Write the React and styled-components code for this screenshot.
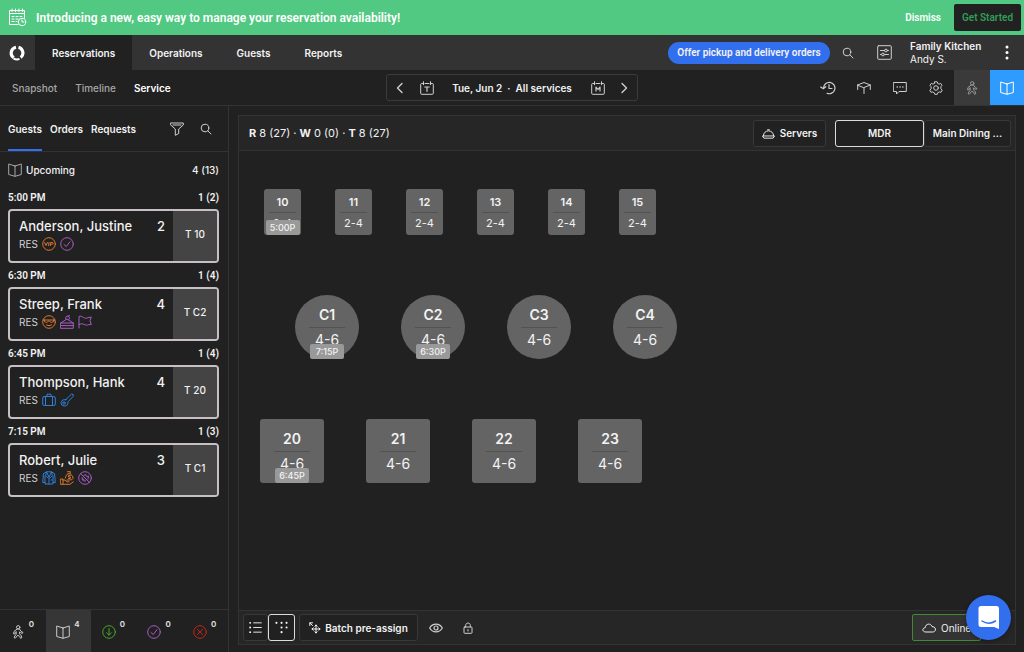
import styled, { createGlobalStyle, css } from "styled-components";

const GlobalStyle = createGlobalStyle`
  *, *::before, *::after {
    box-sizing: border-box;
  }

  html, body, #root {
    height: 100%;
    margin: 0;
  }

  body {
    background: #212121;
    color: #f2f2f2;
    font-family: Inter, "Liberation Sans", sans-serif;
    font-size: 10px;
    line-height: 14px;
  }

  a {
    color: inherit;
    text-decoration: none;
  }

  button {
    margin: 0;
    padding: 0;
    border: 0;
    background: none;
    color: inherit;
    font: inherit;
    cursor: pointer;
  }

  svg {
    display: block;
    flex: none;
  }
`;

const Page = styled.div`
  display: flex;
  flex-direction: column;
  min-height: 100vh;
`;

/* Banner */

const Banner = styled.div`
  display: flex;
  align-items: center;
  height: 35px;
  padding: 0 3px 0 8px;
  background: #52c982;
  color: #fff;
  font-family: Roboto, "Liberation Sans", sans-serif;
`;

const BannerText = styled.p`
  flex: 1;
  margin: 0 0 0 9px;
  font-size: 12px;
  font-weight: 600;
`;

const DismissButton = styled.button`
  margin-right: 13px;
  font-weight: 600;
`;

const StartButton = styled.button`
  width: 67px;
  height: 27px;
  border-radius: 2px;
  background: #212121;
  color: #2f9d58;
  font-weight: 600;
  white-space: nowrap;
`;

/* Main navigation */

const NavBar = styled.header`
  display: flex;
  align-items: stretch;
  height: 35px;
  background: #333;
`;

const Logo = styled.a`
  display: flex;
  align-items: center;
  justify-content: center;
  width: 35px;
  padding-right: 2px;
`;

const Nav = styled.nav`
  display: flex;
  flex: 1;
`;

const NavLink = styled.a`
  display: flex;
  align-items: center;
  padding: 0 17px;
  background: ${(p) => (p.$active ? "#212121" : "transparent")};
  font-weight: 600;
`;

const NavTools = styled.div`
  display: flex;
  align-items: center;
  padding-right: 11px;
`;

const OfferButton = styled.button`
  width: 162px;
  height: 22px;
  border-radius: 11px;
  background: #326fef;
  font-family: Roboto, "Liberation Sans", sans-serif;
  font-weight: 600;
  white-space: nowrap;
`;

const IconButton = styled.button`
  display: flex;
  align-items: center;
  justify-content: center;
  width: ${(p) => p.$width || 36}px;
  color: ${(p) => p.$color || "#cfcfcf"};
  background: ${(p) => p.$bg || "transparent"};
`;

const Account = styled.div`
  width: 91px;
  margin-left: 8px;
  line-height: 13px;
  white-space: nowrap;

  strong {
    display: block;
    font-weight: 600;
  }
`;

/* Second row */

const SubBar = styled.div`
  display: grid;
  grid-template-columns: 1fr 252px 1fr;
  align-items: stretch;
  height: 36px;
  border-bottom: 1px solid #333;
`;

const SubNav = styled.nav`
  display: flex;
  align-items: center;
  gap: 18px;
  padding-left: 12px;
`;

const SubLink = styled.a`
  color: ${(p) => (p.$active ? "#fff" : "#a6a6a6")};
  font-weight: ${(p) => (p.$active ? 600 : 500)};
`;

const DatePicker = styled.div`
  display: flex;
  align-items: center;
  justify-content: space-between;
  align-self: center;
  height: 27px;
  border: 1px solid #3b3b3b;
  border-radius: 3px;
`;

const DateButton = styled.button`
  width: 144px;
  font-weight: 600;
  white-space: pre;
`;

const SubTools = styled.div`
  display: flex;
  justify-content: flex-end;
`;

/* Body */

const Body = styled.div`
  display: flex;
  flex: 1;
`;

const Sidebar = styled.aside`
  display: flex;
  flex-direction: column;
  width: 229px;
  border-right: 1px solid #333;
`;

const SideTabs = styled.div`
  display: flex;
  align-items: stretch;
  gap: 8px;
  height: 46px;
  padding: 0 8px;
  border-bottom: 1px solid #333;
`;

const SideTab = styled.a`
  display: flex;
  align-items: center;
  border-top: 2px solid transparent;
  border-bottom: 2px solid ${(p) => (p.$active ? "#326fef" : "transparent")};
  font-weight: 600;
`;

const SideTabTools = styled.div`
  display: flex;
  gap: 1px;
  margin-left: auto;
`;

const GuestList = styled.div`
  flex: 1;
  padding: 0 9px 0 8px;
`;

const ListHeading = styled.div`
  display: flex;
  align-items: center;
  gap: 4px;
  height: 35px;
  font-weight: 500;

  svg {
    color: #a6a6a6;
  }

  span:last-child {
    margin-left: auto;
  }
`;

const SlotHeading = styled.div`
  display: flex;
  align-items: center;
  justify-content: space-between;
  height: 22px;
  font-family: Roboto, "Liberation Sans", sans-serif;
  font-weight: 600;
`;

const Slot = styled.section`
  margin-bottom: 2px;
`;

const Card = styled.article`
  display: flex;
  height: 54px;
  border: 2px solid #c6bfc6;
  border-radius: 4px;
  overflow: hidden;
`;

const CardBody = styled.div`
  flex: 1;
  padding: 7px 8px 0 9px;
`;

const CardTitle = styled.div`
  display: flex;
  justify-content: space-between;
  font-size: 13px;
  font-weight: 500;
  line-height: 17px;
`;

const CardMeta = styled.div`
  display: flex;
  align-items: center;
  gap: 4px;
  height: 18px;
  color: #d2d2d2;
`;

const CardTable = styled.div`
  display: flex;
  align-items: center;
  justify-content: center;
  width: 44px;
  padding-bottom: 4px;
  background: #444;
  font-weight: 500;
`;

const StatusBar = styled.div`
  display: grid;
  grid-template-columns: repeat(5, 1fr);
  height: 43px;
  border-top: 1px solid #333;
`;

const StatusButton = styled.button`
  display: flex;
  align-items: center;
  justify-content: center;
  gap: 4px;
  padding: 1px 1px 0 0;
  background: ${(p) => (p.$active ? "#363636" : "transparent")};
  color: ${(p) => p.$color || "#c9c9c9"};
`;

const StatusCount = styled.span`
  align-self: flex-start;
  margin-top: 6px;
  color: #e4e4e4;
  font-size: 8px;
  font-weight: 600;
`;

/* Floor plan */

const Floor = styled.main`
  display: flex;
  flex: 1;
  flex-direction: column;
  margin: 9px 8px 7px 9px;
  border: 1px solid #333;
`;

const FloorHeader = styled.div`
  display: flex;
  align-items: center;
  height: 35px;
  padding: 0 4px 0 10px;
  border-bottom: 1px solid #333;
  background: #262626;
`;

const Totals = styled.p`
  flex: 1;
  margin: 0;
  font-size: 11px;
  white-space: pre;
`;

const outlined = css`
  display: flex;
  align-items: center;
  justify-content: center;
  height: 27px;
  border: 1px solid #383838;
  border-radius: 3px;
  background: #212121;
  font-weight: 600;
  white-space: nowrap;
`;

const OutlineButton = styled.button`
  ${outlined}
  gap: ${(p) => p.$gap || 5}px;
  width: ${(p) => p.$width}px;
`;

const ButtonGroup = styled.div`
  display: flex;
  margin-left: ${(p) => p.$gap || 0}px;
`;

const GroupButton = styled.button`
  ${outlined}
  width: ${(p) => p.$width}px;
  border-color: ${(p) => (p.$active ? "#dcdcdc" : "#383838")};
`;

const Canvas = styled.div`
  position: relative;
  flex: 1;
`;

const shapes = {
  bar: { width: 37, height: 46, radius: "3px", size: 11, line: 27, pad: 3, row: 20 },
  round: { width: 64, height: 64, radius: "50%", size: 14, line: 36, pad: 8, row: 24 },
  square: { width: 64, height: 64, radius: "3px", size: 14, line: 36, pad: 8, row: 24 },
};

const TableNode = styled.button`
  position: absolute;
  left: ${(p) => p.$x}px;
  top: ${(p) => p.$y}px;
  display: flex;
  flex-direction: column;
  align-items: center;
  width: ${(p) => p.$shape.width}px;
  height: ${(p) => p.$shape.height}px;
  padding-top: ${(p) => p.$shape.pad}px;
  border-radius: ${(p) => p.$shape.radius};
  background: #646464;
  font-size: ${(p) => p.$shape.size}px;
  line-height: ${(p) => p.$shape.row}px;

  strong {
    width: ${(p) => p.$shape.line}px;
    border-bottom: 1px solid #525252;
    font-weight: 600;
  }
`;

const TimeBadge = styled.span`
  position: absolute;
  bottom: 0;
  left: 50%;
  width: 34px;
  height: 15px;
  margin-left: -17px;
  border-radius: 2px;
  background: #999;
  font-size: 9px;
  font-weight: 500;
  line-height: 15px;
`;

const FloorFooter = styled.div`
  display: flex;
  align-items: center;
  height: 34px;
  padding: 0 34px 0 4px;
  border-top: 1px solid #333;
  background: #262626;
`;

const FooterTools = styled.div`
  display: flex;
  flex: 1;
  align-items: center;
  gap: 4px;
`;

const OnlineButton = styled.button`
  display: flex;
  align-items: center;
  gap: 5px;
  width: 69px;
  height: 27px;
  padding-left: 9px;
  border: 1px solid #43892f;
  border-radius: 2px;
  background: #333;
  font-size: 10px;
`;

const ChatButton = styled.button`
  position: fixed;
  right: 13px;
  bottom: 12px;
  display: flex;
  align-items: center;
  justify-content: center;
  width: 45px;
  height: 45px;
  border-radius: 50%;
  background: #326fef;
  box-shadow: 0 1px 4px rgba(0, 0, 0, 0.4);
`;

/* Icons */

const Icon = ({ size = 14, color = "currentColor", box = 14, children }) => (
  <svg
    width={size}
    height={size}
    viewBox={`0 0 ${box} ${box}`}
    fill="none"
    stroke={color}
    strokeWidth="1"
    strokeLinecap="round"
    strokeLinejoin="round"
    aria-hidden="true"
  >
    {children}
  </svg>
);

const BannerIcon = () => (
  <Icon size={19} box={19}>
    <path d="M10 16.5H1.500V2.500H16.500V10M1.500 5.500H16.500M4 1V3.500M7.500 1V3.500M11 1V3.500M14.500 1V3.500" />
    <path d="M4 8.500H6M8 8.500H10M12 8.500H14M4 11H6M8 11H10M4 13.500H6M8 13.500H9" />
    <circle cx="14" cy="14" r="3.700" />
    <path d="M14 12V14H16" />
  </Icon>
);

const LogoIcon = () => (
  <svg width="16" height="16" viewBox="0 0 16 16" fill="none" stroke="#fff" strokeWidth="3.200" aria-hidden="true">
    <path d="M7 2.200A5.900 5.900 0 0 0 4.700 12.800" />
    <path d="M9.500 2.300A5.900 5.900 0 0 1 11.700 12.600" />
    <path d="M4.500 13.300Q7.500 15.300 10.500 13.900" strokeWidth="2" />
  </svg>
);

const SearchIcon = () => (
  <Icon size={12} box={12}>
    <circle cx="5" cy="5" r="3.800" />
    <path d="M7.800 7.800L11 11" />
  </Icon>
);

const SlidersIcon = () => (
  <Icon size={15} box={15}>
    <rect x="0.700" y="0.700" width="13.600" height="13.600" rx="1" />
    <path d="M3.500 5.500H7.500M10.500 5.500H11.500M3.500 9.500H4.500M7.500 9.500H11.500" />
    <circle cx="9" cy="5.500" r="1.400" />
    <circle cx="6" cy="9.500" r="1.400" />
  </Icon>
);

const DotsIcon = () => (
  <svg width="4" height="15" viewBox="0 0 4 15" fill="#fff" aria-hidden="true">
    <circle cx="2" cy="2" r="1.500" />
    <circle cx="2" cy="7.500" r="1.500" />
    <circle cx="2" cy="13" r="1.500" />
  </svg>
);

const ChevronIcon = ({ next }) => (
  <Icon size={12} box={12}>
    <path d={next ? "M4 1.500L8.500 6L4 10.500" : "M8 1.500L3.500 6L8 10.500"} strokeWidth="1.400" />
  </Icon>
);

const CalendarIcon = ({ month }) => (
  <Icon size={14}>
    <path d="M3.500 2.500H1.500Q0.700 2.500 0.700 3.500V12.300Q0.700 13.300 1.700 13.300H12.300Q13.300 13.300 13.300 12.300V3.500Q13.300 2.500 12.500 2.500H10.500M5 2.500H9M3.500 0.700V3.700M10.500 0.700V3.700" />
    <path
      d={month ? "M5 10V6L7 8.500L9 6V10" : "M4.800 6H9.200M7 6V10.300"}
      strokeWidth="1.200"
    />
  </Icon>
);

const HistoryIcon = () => (
  <Icon size={16} box={16}>
    <path d="M3.500 8A5.700 5.700 0 1 1 7 13.300M0.700 7L3.300 8.700L5.700 6.700M9 4.500V8.500H12" strokeWidth="1.200" />
  </Icon>
);

const TableIcon = () => (
  <Icon>
    <path d="M0.700 4L7 1.500L13.300 4L7 6.500ZM0.700 4V8.500M13.300 4V8.500M7 6.500V12.500" />
  </Icon>
);

const MessageIcon = () => (
  <Icon>
    <path d="M0.700 1.500H13.300V10.500H6L3.500 13V10.500H0.700Z" />
    <path d="M4.200 6H4.300M7 6H7.100M9.800 6H9.900" strokeWidth="1.500" />
  </Icon>
);

const GearIcon = () => (
  <Icon>
    <circle cx="7" cy="7" r="2.300" />
    <path d="M5.800 0.800H8.200L8.700 2.500L10.100 3.100L11.600 2.300L13 4.300L11.900 5.700V7.800L13.200 9.200L12 11.300L10.200 10.900L8.800 11.700L8.200 13.300H5.800L5.200 11.700L3.800 10.900L2 11.300L0.800 9.200L2.100 7.800V5.700L1 4.300L2.400 2.300L3.900 3.100L5.300 2.500Z" />
  </Icon>
);

const WalkInIcon = () => (
  <Icon>
    <circle cx="7.200" cy="2.300" r="1.700" />
    <path d="M5.800 4.300L3 6.500L2.500 8.800L3.700 9L4.300 7.300L5.300 6.700L5 9.500L3 12.300L4.200 13.300L6.700 10.300L8.700 11.300L9.500 13.300L10.800 12.700L10 10.300L8.500 8.800V6.800L9.500 7.800L11.500 8.300L11.800 7.200L10.200 6.500L8.700 4.300Z" />
  </Icon>
);

const BookIcon = ({ size = 14 }) => (
  <Icon size={size}>
    <path d="M7 3L0.700 1V11.500L7 13.300L13.300 11.500V1L7 3ZM7 3V13.300" />
  </Icon>
);

const FilterIcon = () => (
  <Icon>
    <path d="M0.700 1H13.300V3L8.700 7V11.500L5.300 13.300V7L0.700 3ZM3 3H11" />
  </Icon>
);

const ServersIcon = () => (
  <Icon size={13}>
    <path d="M1.500 9.500C1.500 6.300 4 4.200 7 4.200S12.500 6.300 12.500 9.500M0.700 10L2 12H12L13.300 10ZM6 3H8" />
  </Icon>
);

const ListIcon = () => (
  <Icon size={13}>
    <path d="M5 2H13.300M5 7H13.300M5 12H13.300" />
    <path d="M1.200 2H1.300M1.200 7H1.300M1.200 12H1.300" strokeWidth="2" />
  </Icon>
);

const GridIcon = () => (
  <Icon size={13}>
    <path
      d="M1.500 2H1.600M7 2H7.100M12.400 2H12.500M7 7H7.100M12.400 7H12.500M7 12H7.100"
      strokeWidth="2.200"
    />
  </Icon>
);

const AssignIcon = () => (
  <Icon size={12} box={12}>
    <path d="M7 3V11M3 7H11M5.800 4.200L7 3L8.200 4.200M5.800 9.800L7 11L8.200 9.800M9.800 5.800L11 7L9.800 8.200M4.200 5.800L3 7L4.200 8.200M0.800 3.500V0.800H3.500M1 1L3.500 3.500" />
  </Icon>
);

const EyeIcon = () => (
  <Icon>
    <path d="M0.700 7C3.500 1.900 10.500 1.900 13.300 7C10.500 12.100 3.500 12.100 0.700 7Z" strokeWidth="1.200" />
    <circle cx="7" cy="7" r="2" strokeWidth="1.200" />
  </Icon>
);

const LockIcon = () => (
  <Icon size={12} box={12}>
    <rect x="2" y="5" width="8" height="6.300" rx="0.700" />
    <path d="M3.700 5V3.300C3.700 0.300 8.300 0.300 8.300 3.300V5M6 7.500V9" />
  </Icon>
);

const CloudIcon = () => (
  <Icon>
    <path d="M3.500 11C0 11 0 7 3.200 6.700C3.500 2.400 9 1.900 10 5.600C14.500 5.600 14.500 11 11 11Z" />
  </Icon>
);

const ChatIcon = () => (
  <svg width="22" height="25" viewBox="0 0 22 25" aria-hidden="true">
    <path d="M3 1H18.500Q21 1 21 3.500V24L16 22H3Q0.500 22 0.500 19.500V3.500Q0.500 1 3 1Z" fill="#fff" />
    <path d="M4 16Q10.700 20.500 17.500 16" fill="none" stroke="#326fef" strokeWidth="1.500" strokeLinecap="round" />
  </svg>
);

const tagIcons = {
  vip: {
    color: "#d9762f",
    art: (
      <>
        <circle cx="7" cy="7" r="6.300" />
        <path d="M2.700 5.500L4 8.500L5.500 5.500M7 5.500L6.600 8.500M8.300 8.500L8.700 5.500H10Q11.300 5.500 11 6.500T9.500 7.300H8.600" />
      </>
    ),
  },
  check: {
    color: "#a65cc0",
    art: (
      <>
        <circle cx="7" cy="7" r="6.300" />
        <path d="M4 7.500L6.200 9.500L10 4.700" />
      </>
    ),
  },
  shades: {
    color: "#d9762f",
    art: (
      <>
        <circle cx="7" cy="7" r="6.300" />
        <path d="M1 5H13M2.500 5V6.500Q4.500 8.500 6.300 6.500L7 5.500L7.700 6.500Q9.500 8.500 11.500 6.500V5M4.500 10Q7 11.500 9.500 10" />
      </>
    ),
  },
  cake: {
    color: "#a65cc0",
    art: (
      <path d="M0.700 8L7 4L13.300 8V13.300H0.700ZM0.700 8H13.300M0.700 10.600H13.300M6 4.300A2 2 0 1 1 9 4.500M7.700 1.500L9.500 0.500" />
    ),
  },
  flag: {
    color: "#a65cc0",
    art: <path d="M1 13V1.500C4 0 5.500 4 8.500 3.200C10.500 2.700 11.500 2 13.300 2L12 5.500L13.300 9.500C9 9.500 9.500 10.500 7.500 10C4.500 8.500 3.500 8.500 1 9.500" />,
  },
  case: {
    color: "#2f80d8",
    art: (
      <>
        <rect x="0.700" y="3.500" width="12.600" height="9" rx="1.500" />
        <path d="M3.500 3.500V12.500M10.500 3.500V12.500M5 3.500V1.200H9V3.500" />
      </>
    ),
  },
  key: {
    color: "#2f80d8",
    art: (
      <>
        <path d="M6 6.500L11.500 1L13.300 1.500L13 3.500L8 8.800Q8 13.300 4 13Q0.700 12.700 1 9.300Q1.700 6 6 6.500Z" />
        <circle cx="4" cy="10" r="1.200" />
      </>
    ),
  },
  jacket: {
    color: "#2f80d8",
    art: (
      <path d="M4.500 1L1.500 2.500L0.700 11.500H3V13H11V11.500H13.300L12.500 2.500L9.500 1ZM4.500 1L7 6L9.500 1M3 5V11.500M11 5V11.500M7 6V13M4.500 1L3.700 4.500L6 7M9.500 1L10.300 4.500L8 7M9 9H10" />
    ),
  },
  money: {
    color: "#d9762f",
    art: (
      <path d="M7.500 0.700H10.500L10 2.700Q13.700 5 13 7.500Q12.700 9 9.500 9H7M8 2.700Q5.500 4 5.300 7M8 2.700H10M10.300 4.500H8.500V6H10.300V7.500H8.500M0.700 8H3V13.300H0.700ZM3 9H5L7 10.800H9M3 13.300H10L13.300 10.800" />
    ),
  },
  allergy: {
    color: "#a65cc0",
    art: (
      <>
        <circle cx="7" cy="7" r="6.300" />
        <path d="M2.500 2.500L11.500 11.500M4 6.500Q3.500 8.500 5.500 10Q7.500 10.500 8 9.500M6 4.300L7.500 3.500L8.500 5.500L10.500 5L10 8M4.500 8L6 8.500" />
      </>
    ),
  },
  arrow: {
    color: "#4aa32f",
    art: (
      <>
        <circle cx="7" cy="7" r="6.300" />
        <path d="M7 3.500V10M4.500 7.700L7 10.200L9.500 7.700" />
      </>
    ),
  },
  cancel: {
    color: "#c2261b",
    art: (
      <>
        <circle cx="7" cy="7" r="6.300" />
        <path d="M4.300 4.300L9.700 9.700M9.700 4.300L4.300 9.700" />
      </>
    ),
  },
};

const TagIcon = ({ name }) => <Icon color={tagIcons[name].color}>{tagIcons[name].art}</Icon>;

/* Data */

const reservations = [
  { time: "5:00 PM", total: "1 (2)", name: "Anderson, Justine", party: 2, table: "T 10", tags: ["vip", "check"] },
  { time: "6:30 PM", total: "1 (4)", name: "Streep, Frank", party: 4, table: "T C2", tags: ["shades", "cake", "flag"] },
  { time: "6:45 PM", total: "1 (4)", name: "Thompson, Hank", party: 4, table: "T 20", tags: ["case", "key"] },
  { time: "7:15 PM", total: "1 (3)", name: "Robert, Julie", party: 3, table: "T C1", tags: ["jacket", "money", "allergy"] },
];

const statuses = [
  { label: "Walk-ins", count: 0, icon: <WalkInIcon /> },
  { label: "Upcoming", count: 4, icon: <BookIcon />, active: true },
  { label: "Seated", count: 0, icon: <TagIcon name="arrow" /> },
  { label: "Finished", count: 0, icon: <TagIcon name="check" /> },
  { label: "Removed", count: 0, icon: <TagIcon name="cancel" /> },
];

const row = (names, shape, seats, x, y, step, times = {}) =>
  names.map((name, i) => ({ name, shape, seats, x: x + i * step, y, time: times[name] }));

const tables = [
  ...row(["10", "11", "12", "13", "14", "15"], "bar", "2-4", 25, 38, 71, { 10: "5:00P" }),
  ...row(["C1", "C2", "C3", "C4"], "round", "4-6", 56, 144, 106, { C1: "7:15P", C2: "6:30P" }),
  ...row(["20", "21", "22", "23"], "square", "4-6", 21, 268, 106, { 20: "6:45P" }),
];

const App = () => {
  return (
    <>
      <GlobalStyle />
      <Page>
        <Banner>
          <BannerIcon />
          <BannerText>Introducing a new, easy way to manage your reservation availability!</BannerText>
          <DismissButton>Dismiss</DismissButton>
          <StartButton>Get Started</StartButton>
        </Banner>

        <NavBar>
          <Logo href="#" aria-label="Home">
            <LogoIcon />
          </Logo>
          <Nav>
            <NavLink href="#reservations" $active>
              Reservations
            </NavLink>
            <NavLink href="#operations">Operations</NavLink>
            <NavLink href="#guests">Guests</NavLink>
            <NavLink href="#reports">Reports</NavLink>
          </Nav>
          <NavTools>
            <OfferButton>Offer pickup and delivery orders</OfferButton>
            <IconButton aria-label="Search">
              <SearchIcon />
            </IconButton>
            <IconButton aria-label="Preferences">
              <SlidersIcon />
            </IconButton>
            <Account>
              <strong>Family Kitchen</strong>
              Andy S.
            </Account>
            <IconButton aria-label="More" $width={12}>
              <DotsIcon />
            </IconButton>
          </NavTools>
        </NavBar>

        <SubBar>
          <SubNav>
            <SubLink href="#snapshot">Snapshot</SubLink>
            <SubLink href="#timeline">Timeline</SubLink>
            <SubLink href="#service" $active>
              Service
            </SubLink>
          </SubNav>
          <DatePicker>
            <IconButton aria-label="Previous day" $width={26}>
              <ChevronIcon />
            </IconButton>
            <IconButton aria-label="Today" $width={26}>
              <CalendarIcon />
            </IconButton>
            <DateButton>{"Tue, Jun 2  ·  All services"}</DateButton>
            <IconButton aria-label="Month" $width={26}>
              <CalendarIcon month />
            </IconButton>
            <IconButton aria-label="Next day" $width={26}>
              <ChevronIcon next />
            </IconButton>
          </DatePicker>
          <SubTools>
            <IconButton aria-label="History">
              <HistoryIcon />
            </IconButton>
            <IconButton aria-label="Tables">
              <TableIcon />
            </IconButton>
            <IconButton aria-label="Messages">
              <MessageIcon />
            </IconButton>
            <IconButton aria-label="Settings">
              <GearIcon />
            </IconButton>
            <IconButton aria-label="Add walk-in" $bg="#3a3a3a" $color="#999">
              <WalkInIcon />
            </IconButton>
            <IconButton aria-label="Add reservation" $width={34} $bg="#2f9bff" $color="#fff">
              <BookIcon />
            </IconButton>
          </SubTools>
        </SubBar>

        <Body>
          <Sidebar>
            <SideTabs>
              <SideTab href="#guests" $active>
                Guests
              </SideTab>
              <SideTab href="#orders">Orders</SideTab>
              <SideTab href="#requests">Requests</SideTab>
              <SideTabTools>
                <IconButton aria-label="Filter" $width={28}>
                  <FilterIcon />
                </IconButton>
                <IconButton aria-label="Search guests" $width={28}>
                  <SearchIcon />
                </IconButton>
              </SideTabTools>
            </SideTabs>

            <GuestList>
              <ListHeading>
                <BookIcon />
                <span>Upcoming</span>
                <span>4 (13)</span>
              </ListHeading>
              {reservations.map((r) => (
                <Slot key={r.time}>
                  <SlotHeading>
                    <span>{r.time}</span>
                    <span>{r.total}</span>
                  </SlotHeading>
                  <Card>
                    <CardBody>
                      <CardTitle>
                        <span>{r.name}</span>
                        <span>{r.party}</span>
                      </CardTitle>
                      <CardMeta>
                        <span>RES</span>
                        {r.tags.map((tag) => (
                          <TagIcon key={tag} name={tag} />
                        ))}
                      </CardMeta>
                    </CardBody>
                    <CardTable>{r.table}</CardTable>
                  </Card>
                </Slot>
              ))}
            </GuestList>

            <StatusBar>
              {statuses.map((s) => (
                <StatusButton key={s.label} aria-label={s.label} $active={s.active}>
                  {s.icon}
                  <StatusCount>{s.count}</StatusCount>
                </StatusButton>
              ))}
            </StatusBar>
          </Sidebar>

          <Floor>
            <FloorHeader>
              <Totals>
                <b>R</b> 8 (27) · <b>W</b> 0 (0) · <b>T</b> 8 (27)
              </Totals>
              <OutlineButton $width={73}>
                <ServersIcon />
                Servers
              </OutlineButton>
              <ButtonGroup $gap={9}>
                <GroupButton $width={89} $active>
                  MDR
                </GroupButton>
                <GroupButton $width={87}>Main Dining ...</GroupButton>
              </ButtonGroup>
            </FloorHeader>

            <Canvas>
              {tables.map((t) => (
                <TableNode key={t.name} $shape={shapes[t.shape]} $x={t.x} $y={t.y}>
                  <strong>{t.name}</strong>
                  <span>{t.seats}</span>
                  {t.time && <TimeBadge>{t.time}</TimeBadge>}
                </TableNode>
              ))}
            </Canvas>

            <FloorFooter>
              <FooterTools>
                <ButtonGroup>
                  <GroupButton $width={25} aria-label="List view">
                    <ListIcon />
                  </GroupButton>
                  <GroupButton $width={27} $active aria-label="Floor view">
                    <GridIcon />
                  </GroupButton>
                </ButtonGroup>
                <OutlineButton $width={119} $gap={4}>
                  <AssignIcon />
                  Batch pre-assign
                </OutlineButton>
                <IconButton aria-label="Show" $width={28}>
                  <EyeIcon />
                </IconButton>
                <IconButton aria-label="Lock" $width={28}>
                  <LockIcon />
                </IconButton>
              </FooterTools>
              <OnlineButton>
                <CloudIcon />
                Online
              </OnlineButton>
            </FloorFooter>
          </Floor>
        </Body>
      </Page>
      <ChatButton aria-label="Open chat">
        <ChatIcon />
      </ChatButton>
    </>
  );
};

export default App;
